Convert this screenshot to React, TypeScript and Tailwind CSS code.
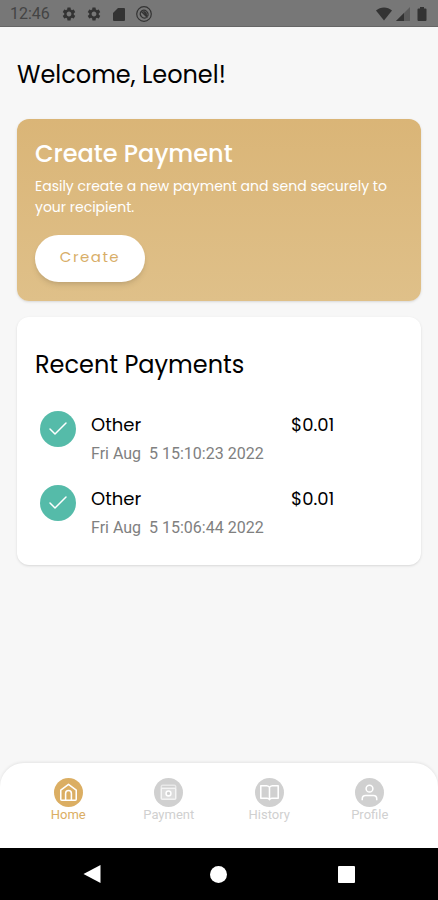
import React, { useState } from 'react';
import { Check } from 'lucide-react';
import { MdSettings } from 'react-icons/md';

interface Payment {
  id: number;
  title: string;
  date: string;
  amount: string;
}

const payments: Payment[] = [
  { id: 1, title: 'Other', date: 'Fri Aug  5 15:10:23 2022', amount: '$0.01' },
  { id: 2, title: 'Other', date: 'Fri Aug  5 15:06:44 2022', amount: '$0.01' },
];

const HomeIcon = () => (
  <path d="M7 12.5 15 6.5l8 6V22a1 1 0 0 1-1 1H8a1 1 0 0 1-1-1ZM12 23v-7a3 3 0 0 1 6 0v7" />
);

const PaymentIcon = () => (
  <>
    <path d="M7.5 10.5V9A1.5 1.5 0 0 1 9 7.5h12A1.5 1.5 0 0 1 22.5 9v1.5" strokeOpacity="0.5" />
    <rect x="7.5" y="10.5" width="15" height="11.5" rx="1" fill="white" fillOpacity="0.25" strokeOpacity="0.7" />
    <circle cx="15" cy="16" r="2.5" fill="currentColor" />
  </>
);

const HistoryIcon = () => (
  <path d="M15 9.5C14 8.5 13 8 12 8H6v13h6.5c1 0 2 .5 2.5 1.5.5-1 1.5-1.5 2.5-1.5H24V8h-6c-1 0-2 .5-3 1.5v13" />
);

const ProfileIcon = () => (
  <>
    <circle cx="15" cy="11" r="3.5" />
    <path d="M7.5 23v-1.5c0-2 1.5-3.5 3.5-3.5h8c2 0 3.5 1.5 3.5 3.5V23" />
  </>
);

const tabs = [
  { name: 'Home', icon: HomeIcon },
  { name: 'Payment', icon: PaymentIcon },
  { name: 'History', icon: HistoryIcon },
  { name: 'Profile', icon: ProfileIcon },
];

function StatusBar() {
  return (
    <div className="flex h-[27px] items-center border-b border-[#666666] bg-[#777777] px-2 text-[#333333]">
      <span className="w-[53px] pt-[2px] pl-[2px] text-base text-[#444444]">12:46</span>
      <div className="flex items-center gap-[9px] pt-[2px]">
        <MdSettings className="h-4 w-4" />
        <MdSettings className="h-4 w-4" />
        <svg viewBox="0 0 16 16" className="h-4 w-4" fill="currentColor">
          <path d="M7 2h6a1 1 0 0 1 1 1v11a1 1 0 0 1-1 1H3a1 1 0 0 1-1-1V7Z" />
        </svg>
        <svg viewBox="0 0 16 16" className="h-4 w-4" fill="none" stroke="currentColor">
          <circle cx="8" cy="8" r="7.3" strokeWidth="1.2" />
          <path d="M5 5.5A4.2 4.2 0 0 0 10.5 11.5M5.5 5A4.2 4.2 0 0 1 11.5 10.5" strokeWidth="1.2" />
          <path d="m5 5 6.5 6.5" strokeWidth="1.4" />
          <path d="M7.5 5.5a3 3 0 0 1 3 3V10Z" fill="currentColor" />
        </svg>
      </div>
      <div className="ml-auto flex items-center gap-1 pt-[2px]">
        <svg viewBox="0 0 16 14" className="h-[14px] w-4" fill="currentColor">
          <path d="M0 3.5C4.5-.5 11.5-.5 16 3.5L8 13.5Z" />
        </svg>
        <svg viewBox="0 0 14 14" className="h-[14px] w-[14px]" fill="currentColor">
          <path d="M14 0v14H0Z" opacity="0.4" />
          <path d="M8 6v8H0Z" />
        </svg>
        <svg viewBox="0 0 16 16" className="h-4 w-4" fill="currentColor">
          <path d="M6 1h4v1.5h1.5a1 1 0 0 1 1 1V14a1 1 0 0 1-1 1h-7a1 1 0 0 1-1-1V3.5a1 1 0 0 1 1-1H6Z" />
        </svg>
      </div>
    </div>
  );
}

export default function App() {
  const [activeTab, setActiveTab] = useState('Home');

  return (
    <div className="flex min-h-screen flex-col bg-[#f7f7f7] font-['Roboto',sans-serif] text-black">
      <StatusBar />

      <main className="flex-1 px-[17px] font-['Poppins','Inter',sans-serif]">
        <h1 className="mt-8 text-2xl">Welcome, Leonel!</h1>

        {/* Create Payment */}
        <section className="mt-7 rounded-xl bg-gradient-to-b from-[#dab577] to-[#dfc089] px-[18px] py-[19px] text-white shadow">
          <h2 className="text-2xl font-medium">Create Payment</h2>
          <p className="mt-[6px] text-sm leading-[21px]">
            Easily create a new payment and send securely to your recipient.
          </p>
          <button className="mt-[17px] h-[47px] w-[110px] rounded-full bg-white pb-[2px] text-[15px] tracking-widest text-[#d8ae68] shadow-md">
            Create
          </button>
        </section>

        {/* Recent Payments */}
        <section className="mt-4 rounded-xl bg-white px-[18px] pt-8 pb-[26px] shadow">
          <h2 className="text-2xl">Recent Payments</h2>
          <ul className="mt-[26px] flex flex-col gap-4">
            {payments.map((payment) => (
              <li key={payment.id} className="flex items-start">
                <span className="mx-[5px] mt-1 flex h-9 w-9 items-center justify-center rounded-full bg-[#55bba9] text-white">
                  <Check className="h-6 w-6" strokeWidth={1.5} />
                </span>
                <div className="ml-[10px] w-1/2">
                  <p className="text-lg leading-9">{payment.title}</p>
                  <p className="font-['Roboto',sans-serif] text-base leading-[22px] whitespace-pre text-[#808080]">{payment.date}</p>
                </div>
                <span className="ml-4 text-lg leading-9">{payment.amount}</span>
              </li>
            ))}
          </ul>
        </section>
      </main>

      <nav className="grid h-[85px] grid-cols-4 items-start rounded-t-3xl bg-white px-[18px] pt-[15px] shadow-[0_-1px_3px_rgba(0,0,0,0.08)]">
        {tabs.map(({ name, icon: Icon }) => (
          <button
            key={name}
            onClick={() => setActiveTab(name)}
            className={`flex flex-col items-center text-[13px] leading-4 ${activeTab === name ? 'text-[#dbae63]' : 'text-[#d0d0d0]'}`}
          >
            <svg viewBox="0 0 30 30" className="h-[29px] w-[29px]">
              <circle cx="15" cy="15" r="15" fill="currentColor" />
              <g fill="none" stroke="white" strokeWidth="1.6" strokeLinejoin="round">
                <Icon />
              </g>
            </svg>
            {name}
          </button>
        ))}
      </nav>

      {/* System navigation */}
      <div className="grid h-[52px] grid-cols-3 items-center justify-items-center bg-black px-7 text-white">
        <button aria-label="Back">
          <svg viewBox="0 0 18 18" className="h-[18px] w-[18px]" fill="currentColor">
            <path d="M17.5 0v18L.5 9Z" />
          </svg>
        </button>
        <button aria-label="Home" className="h-[17px] w-[17px] rounded-full bg-white" />
        <button aria-label="Recent apps" className="h-[17px] w-[17px] rounded-[1px] bg-white" />
      </div>
    </div>
  );
}
